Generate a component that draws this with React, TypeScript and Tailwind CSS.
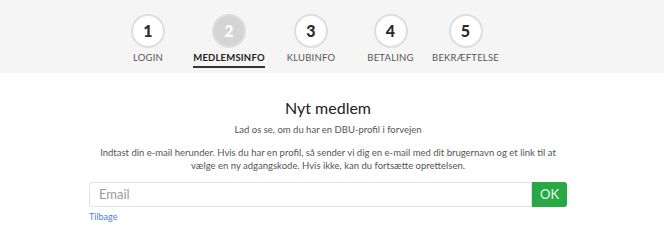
import React, { useState } from 'react';

const steps = [
  { n: 1, label: 'LOGIN', w: 'w-[80px]' },
  { n: 2, label: 'MEDLEMSINFO', w: 'w-[82px]' },
  { n: 3, label: 'KLUBINFO', w: 'w-[82px]' },
  { n: 4, label: 'BETALING', w: 'w-[77px]' },
  { n: 5, label: 'BEKRÆFTELSE', w: 'w-[73px]' },
];

const App = () => {
  const [email, setEmail] = useState('');
  const active = 2;

  return (
    <div className="min-h-screen bg-white font-['Lato',sans-serif] text-[#333]">
      {/* Stepper */}
      <div className="h-[73px] bg-[#f5f5f5] flex items-start pl-[108px] pt-[14px]">
        {steps.map(s => (
          <div key={s.n} className={`${s.w} flex flex-col items-center`}>
            <div
              className={`w-[34px] h-[34px] rounded-full border-2 border-[#dedede] flex items-center justify-center text-[16px] font-black ${
                s.n === active ? 'bg-[#d4d4d4] text-white' : 'bg-white text-[#2a2a2a]'
              }`}
            >
              {s.n}
            </div>
            <div
              className={`mt-[4px] text-[9.5px] leading-[12px] tracking-[0.2px] ${
                s.n === active ? 'font-bold text-[#222] border-b-2 border-[#333] pb-[2px]' : 'text-[#555]'
              }`}
            >
              {s.label}
            </div>
          </div>
        ))}
      </div>

      {/* Form */}
      <div className="w-[478px] ml-[89px] flex flex-col">
        <h1 className="mt-[25px] text-center text-[16px] leading-[20px] text-[#222]">Nyt medlem</h1>
        <p className="mt-[5px] text-center text-[9.5px] leading-[13px] text-[#555]">
          Lad os se, om du har en DBU-profil i forvejen
        </p>
        <p className="mt-[10px] text-center text-[9.5px] leading-[13px] text-[#555] px-[8px]">
          Indtast din e-mail herunder. Hvis du har en profil, så sender vi dig en e-mail med dit brugernavn og et link til at
          vælge en ny adgangskode. Hvis ikke, kan du fortsætte oprettelsen.
        </p>
        <div className="mt-[10px] flex h-[25px]">
          <input
            value={email}
            onChange={e => setEmail(e.target.value)}
            placeholder="Email"
            className="flex-1 min-w-0 border border-[#e2e2e2] rounded-l-[3px] px-[9px] text-[13px] text-[#333] placeholder:text-[#999] outline-none"
          />
          <button className="w-[35px] bg-[#28a745] text-[#eafbe9] text-[13px] rounded-r-[3px]">OK</button>
        </div>
        <a href="#" className="mt-[4px] text-[9px] leading-[12px] text-[#4a7fd6]">Tilbage</a>
      </div>
    </div>
  );
};

export default App;
